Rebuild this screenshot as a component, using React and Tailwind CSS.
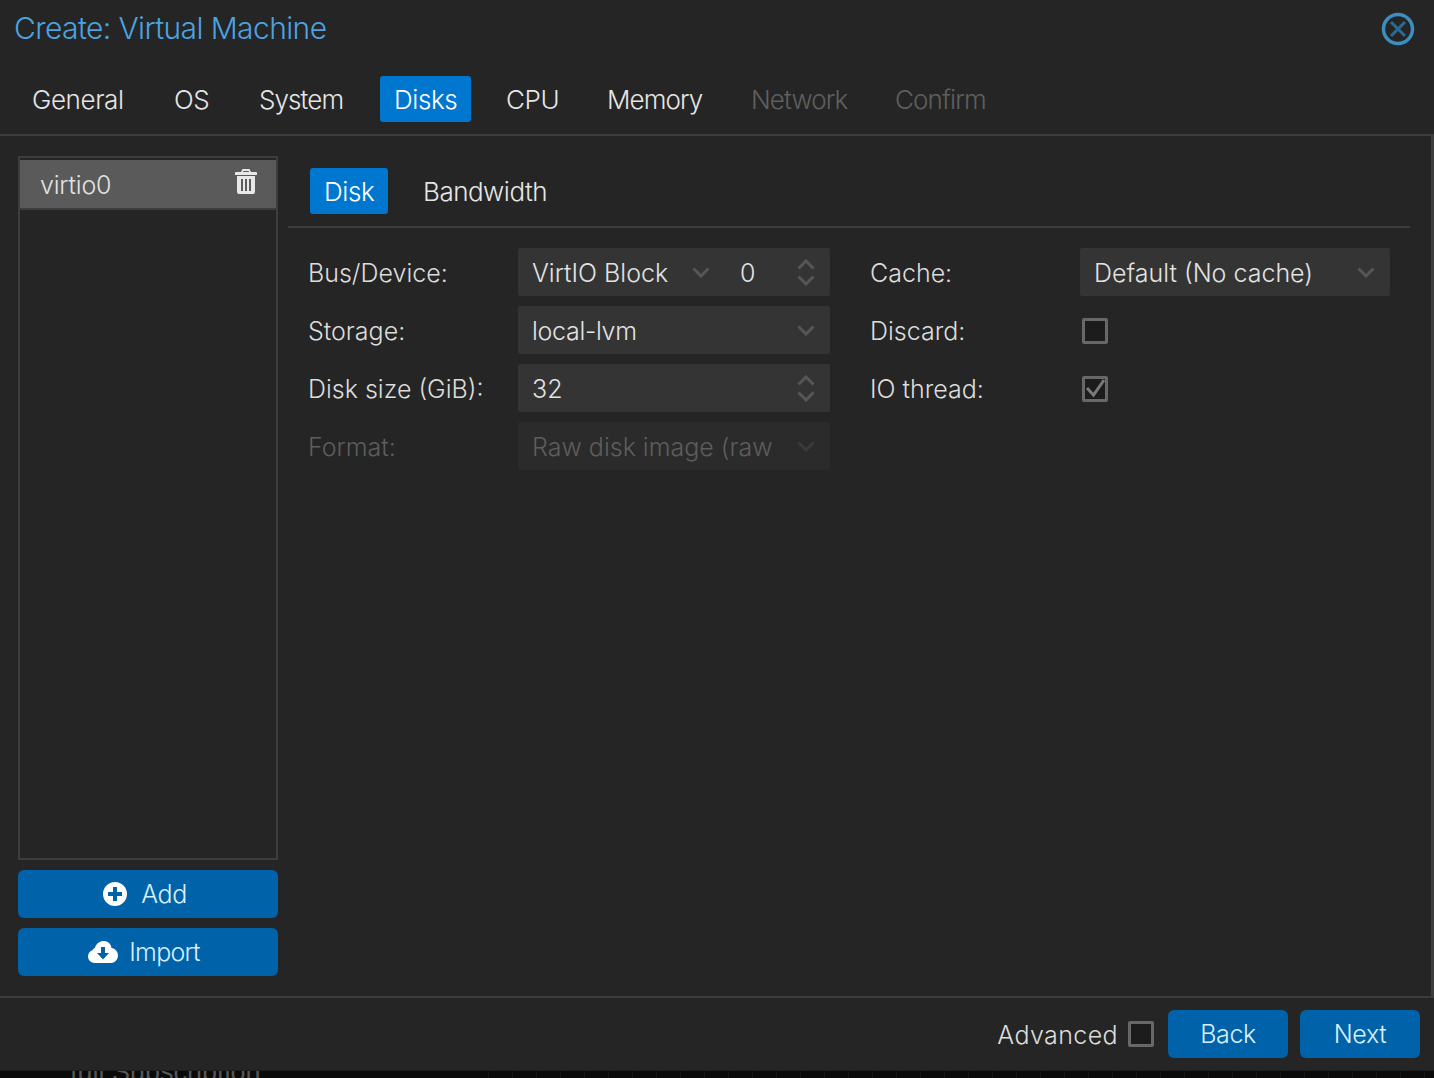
import React from "react";

const font = "font-['Inter','Liberation_Sans',sans-serif] font-light";

function Chevron({ up = false, className = "" }) {
  return (
    <svg width="18" height="11" viewBox="0 0 18 11" fill="none" className={className}>
      <path d={up ? "M1.500 9.500 L9 2 L16.500 9.500" : "M1.500 1.500 L9 9 L16.500 1.500"} stroke="currentColor" strokeWidth="3" />
    </svg>
  );
}

function Spinner() {
  return (
    <div className="flex flex-col gap-[5px] text-[#565656]">
      <Chevron up />
      <Chevron />
    </div>
  );
}

function Field({ children, disabled = false }) {
  return (
    <div className={`flex h-12 items-center rounded-[2px] pl-[14px] pr-[15px] text-[25px] ${disabled ? "bg-[#2b2b2b] text-[#5d5d5d]" : "bg-[#343434] text-[#e2e2e2]"}`}>
      {children}
    </div>
  );
}

function Label({ children, disabled = false }) {
  return <div className={`flex h-12 items-center pt-[3px] text-[25px] ${disabled ? "text-[#5d5d5d]" : "text-[#dcdcdc]"}`}>{children}</div>;
}

function Text({ children, className = "pt-[3px]" }) {
  return <span className={className}>{children}</span>;
}

function Check({ checked = false }) {
  return (
    <div className="flex h-[26px] w-[26px] items-center justify-center rounded-[2px] border-[3px] border-[#686868] bg-[#1c1c1c]">
      {checked && (
        <svg width="22" height="22" viewBox="0 0 22 22" fill="none" className="shrink-0">
          <path d="M3 10 L9.500 17 L20 2" stroke="#7a7a7a" strokeWidth="3" />
        </svg>
      )}
    </div>
  );
}

function WizardTab({ children, active = false, disabled = false, className = "", spacing = "pl-[14px] tracking-[-0.4px]" }) {
  return (
    <div className={`flex h-[46px] items-center rounded-[3px] text-[26px] ${spacing} ${active ? "bg-[#0077cf] text-white" : disabled ? "text-[#5f5f5f]" : "text-[#e6e6e6]"} ${className}`}>
      {children}
    </div>
  );
}

function BlueButton({ children, className = "" }) {
  return (
    <div className={`flex h-12 items-center justify-center rounded-[6px] bg-[#0062a8] text-[25px] tracking-[-0.4px] text-[#d8f0ff] ${className}`}>
      {children}
    </div>
  );
}

const tight = "pl-[13px] tracking-[-0.9px]";

export default function App() {
  return (
    <div className={`isolate flex h-[1078px] w-[1434px] flex-col overflow-hidden bg-[#0a0a0a] ${font}`}>
      <div className="flex h-[1071px] shrink-0 flex-col border-b border-[#1d1d1d] bg-[#252525]">
        <div className="flex h-[76px] shrink-0 items-start justify-between pl-[14px] pr-[18px] pt-[8px]">
          <div className="text-[30px] leading-[40px] tracking-[-0.6px] text-[#4ba3e0]">Create: Virtual Machine</div>
          <svg width="36" height="36" viewBox="0 0 36 36" fill="none" className="mt-[3px]">
            <circle cx="18" cy="18" r="14.500" stroke="#3a8fc0" strokeWidth="3.500" />
            <path d="M11 11 L25 25 M25 11 L11 25" stroke="#2a6a96" strokeWidth="3" />
          </svg>
        </div>

        <div className="flex h-[60px] shrink-0 items-start gap-[21px] border-b-2 border-[#3d3d3d] pl-[18px]">
          <WizardTab className="w-[121px]">General</WizardTab>
          <WizardTab className="w-[65px]">OS</WizardTab>
          <WizardTab className="w-[113px]" spacing={tight}>System</WizardTab>
          <WizardTab active className="w-[91px]">Disks</WizardTab>
          <WizardTab className="w-[81px]">CPU</WizardTab>
          <WizardTab className="w-[123px]" spacing={tight}>Memory</WizardTab>
          <WizardTab disabled className="w-[123px]" spacing={tight}>Network</WizardTab>
          <WizardTab disabled className="w-[119px]" spacing={tight}>Confirm</WizardTab>
        </div>

        <div className="flex h-[862px] shrink-0 border-b-2 border-r-[3px] border-[#3d3d3d] pl-[18px] pt-5">
          <div className="flex w-[260px] flex-col pb-5">
            <div className="flex-1 border-2 border-[#3d3d3d] pt-[2px]">
              <div className="box-content flex h-12 items-center justify-between border-b-2 border-[#3d3d3d] bg-[#5a5a5a] pl-5 pr-[19px] text-[25px] tracking-[-0.2px] text-[#e2e2e2]">
                <Text className="pt-[4px]">virtio0</Text>
                <svg width="22" height="26" viewBox="0 0 22 26" className="-mt-[4px]">
                  <path fillRule="evenodd" fill="#e8e8e8" d="M7.500 0 H14.500 L16 3 H21 Q22 3 22 4 V6 H0 V4 Q0 3 1 3 H6 Z M8.500 2 L8 3 H14 L13.500 2 Z M2 7 H20 V23 Q20 25 18 25 H4 Q2 25 2 23 Z M6 10 V22 H8 V10 Z M10 10 V22 H12 V10 Z M14 10 V22 H16 V10 Z" />
                </svg>
              </div>
            </div>
            <BlueButton className="mt-[10px] gap-[14px] pr-[6px]">
              <svg width="24" height="24" viewBox="0 0 24 24">
                <path fillRule="evenodd" fill="#ffffff" d="M12 0 A12 12 0 1 0 12 24 A12 12 0 1 0 12 0 Z M10 5 H14 V10 H19 V14 H14 V19 H10 V14 H5 V10 H10 Z" />
              </svg>
              <Text className="pt-[1px]">Add</Text>
            </BlueButton>
            <BlueButton className="mt-[10px] gap-[11px] pr-[8px]">
              <svg width="30" height="22" viewBox="0 0 30 22">
                <path fillRule="evenodd" fill="#ffffff" d="M16 0 C20 0 23 3 23.500 7 C27 7.500 30 10.500 30 14.500 C30 19 26.500 22 23 22 H6.500 C3 22 0 19 0 15.500 C0 12.500 2 10 4.500 9.300 C5 8.500 5.500 7.500 7 6.800 C8 2.500 12 0 16 0 Z M13 6 V12 H9 L15 18.500 L21 12 H17 V6 Z" />
              </svg>
              <Text className="pt-[1px] tracking-[-0.8px]">Import</Text>
            </BlueButton>
          </div>

          <div className="ml-[10px] flex flex-1 flex-col pr-[21px]">
            <div className="flex h-[72px] shrink-0 items-start gap-[22px] border-b-2 border-[#3d3d3d] pl-[22px] pt-3">
              <WizardTab active className="w-[78px]">Disk</WizardTab>
              <WizardTab spacing="pl-[13px] tracking-[-0.5px]">Bandwidth</WizardTab>
            </div>

            <div className="flex gap-10 pl-5 pr-5 pt-5">
              <div className="grid w-[522px] grid-cols-[210px_312px] content-start gap-y-[10px]">
                <Label>Bus/Device:</Label>
                <Field>
                  <Text className="w-[160px] shrink-0 pt-[3px]">VirtIO Block</Text>
                  <Chevron className="shrink-0 text-[#565656]" />
                  <Text className="ml-[30px] flex-1 pt-[3px]">0</Text>
                  <Spinner />
                </Field>
                <Label>Storage:</Label>
                <Field>
                  <Text className="flex-1 pt-[3px] tracking-[-0.3px]">local-lvm</Text>
                  <Chevron className="shrink-0 text-[#565656]" />
                </Field>
                <Label>Disk size (GiB):</Label>
                <Field>
                  <Text className="flex-1 pt-[3px]">32</Text>
                  <Spinner />
                </Field>
                <Label disabled>Format:</Label>
                <Field disabled>
                  <Text className="flex-1 whitespace-nowrap pt-[3px]">Raw disk image (raw</Text>
                  <Chevron className="shrink-0 text-[#3a3a3a]" />
                </Field>
              </div>
              <div className="grid w-[520px] grid-cols-[210px_310px] content-start gap-y-[10px]">
                <Label>Cache:</Label>
                <Field>
                  <Text className="flex-1 pt-[3px]">Default (No cache)</Text>
                  <Chevron className="shrink-0 text-[#565656]" />
                </Field>
                <Label>Discard:</Label>
                <div className="flex h-12 items-center pl-[2px] pt-[2px]"><Check /></div>
                <Label>IO thread:</Label>
                <div className="flex h-12 items-center pl-[2px] pt-[2px]"><Check checked /></div>
              </div>
            </div>
          </div>
        </div>

        <div className="flex flex-1 items-start justify-end pr-[14px] pt-3">
          <div className="flex h-12 items-center gap-[10px] pr-[14px] text-[25px] tracking-[0.4px] text-[#dcdcdc]">
            <Text>Advanced</Text>
            <Check />
          </div>
          <BlueButton className="w-[120px]"><Text className="pt-[2px]">Back</Text></BlueButton>
          <BlueButton className="ml-3 w-[120px]"><Text className="pt-[2px]">Next</Text></BlueButton>
        </div>
      </div>
      <div className="flex h-[7px] shrink-0">
        <div className="-mt-[11px] h-[18px] w-[465px] shrink-0 pl-[70px] font-['Liberation_Sans',sans-serif] text-[27px] leading-[24px] text-[#565656]">
          <span className="relative -z-10 whitespace-nowrap">full Subscription</span>
        </div>
        <div className="flex-1 bg-[repeating-linear-gradient(90deg,transparent_0,transparent_23px,#161616_23px,#161616_24px)]" />
      </div>
    </div>
  );
}
